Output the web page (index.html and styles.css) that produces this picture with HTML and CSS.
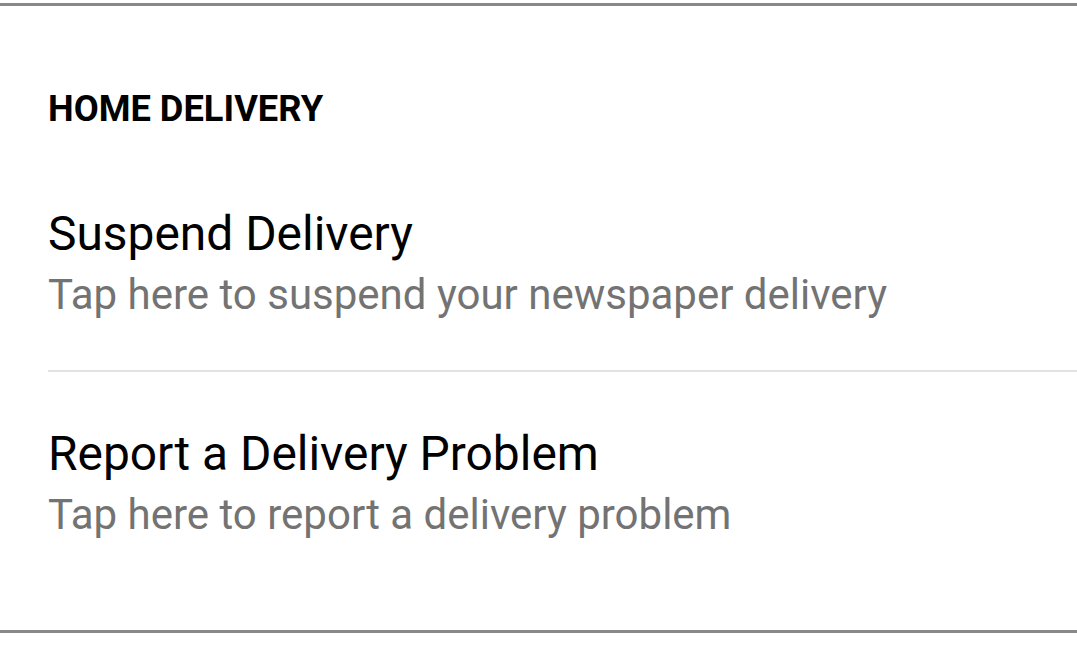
FILE: index.html
```html
<!DOCTYPE html>
<html lang="en">
<head>
<meta charset="utf-8">
<title>Home Delivery</title>
<link rel="stylesheet" href="styles.css">
</head>
<body>
<section class="panel">
  <h2 class="section-title">HOME DELIVERY</h2>
  <ul class="list">
    <li class="item">
      <div class="item-title">Suspend Delivery</div>
      <div class="item-sub">Tap here to suspend your newspaper delivery</div>
    </li>
    <li class="item">
      <div class="item-title">Report a Delivery Problem</div>
      <div class="item-sub">Tap here to report a delivery problem</div>
    </li>
  </ul>
</section>
</body>
</html>
```
FILE: styles.css
```css
html, body {
  margin: 0;
  padding: 0;
  background: #ffffff;
}
body {
  font-family: Roboto, "Liberation Sans", sans-serif;
}
.panel {
  margin-top: 3px;
  border-top: 3px solid #888888;
  border-bottom: 3px solid #888888;
  padding: 81px 0 40px 48px;
}
.section-title {
  margin: 0 0 21px 0;
  font-size: 36.3px;
  line-height: 44px;
  font-weight: 700;
  color: #000000;
}
.list {
  list-style: none;
  margin: 0;
  padding: 0;
}
.item {
  padding: 52px 0 44px 0;
  border-bottom: 2px solid #e2e2e2;
}
.item:last-child {
  border-bottom: none;
}
.item-title {
  font-size: 47.9px;
  line-height: 60px;
  color: #000000;
}
.item-sub {
  font-size: 42px;
  line-height: 62px;
  color: #737373;
}
```
